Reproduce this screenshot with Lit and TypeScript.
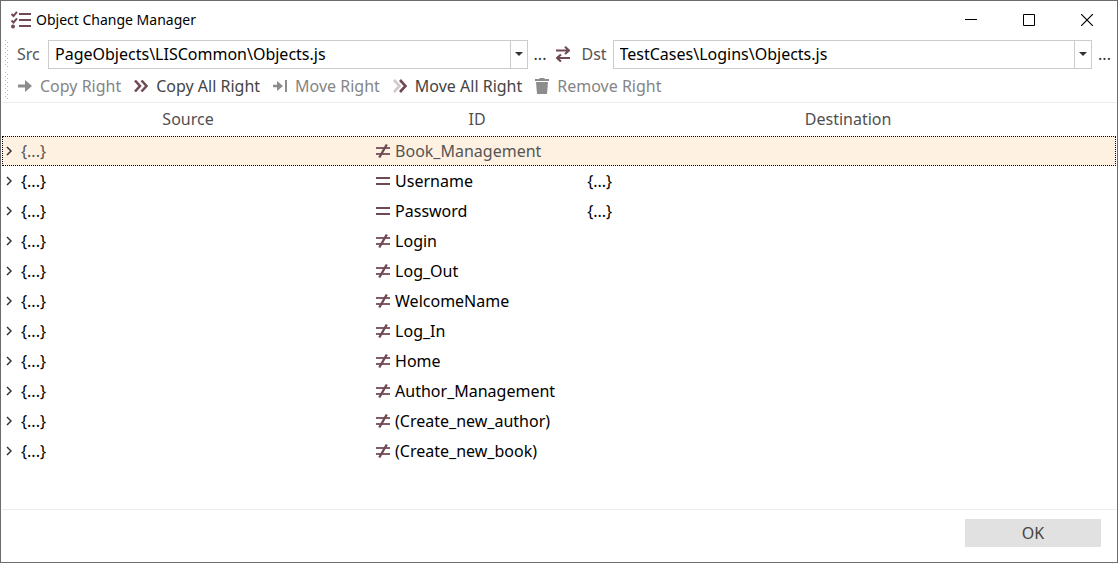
import { LitElement, html, css, svg, nothing } from "lit";
import { customElement, property, state } from "lit/decorators.js";

const glyphs: Record<string, unknown> = {
  arrow: svg`<path d="M0 6.500h7V2l7 6-7 6V9.500H0z" fill="#8c8c8c"/>`,
  chevrons: svg`<path d="M1 2.500L6 8l-5 5.500M7.500 2.500l5 5.500-5 5.500" fill="none" stroke="#6f4a55" stroke-width="2.600"/>`,
  arrowStop: svg`<path d="M0 6.800h4V3l6 5-6 5V9.200H0zM12 2h2v12h-2z" fill="#8c8c8c"/>`,
  fadedChevrons: svg`<path d="M1 2l5.500 6L1 14" fill="none" stroke="#d3c8cc" stroke-width="2.600"/><path d="M7 2l5.500 6L7 14" fill="none" stroke="#6f4a55" stroke-width="2.600"/>`,
  trash: svg`<path d="M0 1h4.500V0h5v1H14v2H0zM1 4h12l-1 12H2z" fill="#8c8c8c"/>`,
  swap: svg`<path d="M0 4.500h13M9 .8l4 3.700-4 3.500M14 12H1M5 8.500L1 12l4 3.500" fill="none" stroke="#6f4a55" stroke-width="2.200"/>`,
  equal: svg`<path d="M0 4h14v2H0zM0 10h14v2H0z" fill="#6f4a55"/>`,
  notEqual: svg`<path d="M0 4h14v2H0zM0 10h14v2H0z" fill="#805d67"/><path d="M10.800 1.500l-7.500 13" stroke="#6f4a55" stroke-width="2.400"/>`,
};

const glyph = (name: string) =>
  html`<svg class="glyph" width="14" height="16" viewBox="0 0 14 16" aria-hidden="true">${glyphs[name]}</svg>`;

const baseText = css`
  button, select {
    font: inherit;
    color: inherit;
    border: 0;
    background: none;
    padding: 0;
    margin: 0;
  }
  svg { display: block; flex: none; }
`;

@customElement("title-bar")
class TitleBar extends LitElement {
  static styles = [baseText, css`
    :host { display: flex; align-items: center; height: 37px; padding: 0 1px 0 9px; }
    .title { margin: 0 auto 0 5px; font-size: 14px; font-weight: 400; color: #000; }
    .control { width: 58px; height: 35px; display: grid; place-items: center; }
  `];
  render() {
    return html`
      <svg width="20" height="18" viewBox="0 0 20 18" aria-hidden="true">
        <path d="M8 3h12M8 9h12M8 15h12" stroke="#6f4a55" stroke-width="2.200"/>
        <path d="M.5 3l2 2L6 .8M.5 9.500l2 2L6 7.300" fill="none" stroke="#6f4a55" stroke-width="2"/>
        <circle cx="2" cy="15.500" r="2" fill="#6f4a55"/>
      </svg>
      <h1 class="title">Object Change Manager</h1>
      <button class="control" aria-label="Minimize"><svg width="12" height="12"><path d="M0 5.500h12" stroke="#000"/></svg></button>
      <button class="control" aria-label="Maximize"><svg width="12" height="12"><path d="M.5.5h11v11H.5z" fill="none" stroke="#000"/></svg></button>
      <button class="control" aria-label="Close"><svg width="12" height="12"><path d="M0 0l12 12M12 0L0 12" stroke="#000" stroke-width="1.200"/></svg></button>
    `;
  }
}

@customElement("file-picker")
class FilePicker extends LitElement {
  @property() label = "";
  @property() path = "";
  static styles = [baseText, css`
    :host { display: flex; align-items: center; flex: 1; min-width: 0; }
    .label { width: 31px; color: #555; }
    .box { flex: 1; min-width: 0; display: grid; border: 1px solid #ccc; height: 27px; }
    .field { grid-area: 1 / 1; appearance: none; width: 100%; padding: 0 24px 0 6px; color: #000; background: #fff; border-radius: 0; }
    .drop { grid-area: 1 / 1; justify-self: end; width: 16px; display: grid; place-items: center; border-left: 1px solid #ccc; pointer-events: none; }
    .browse { width: 25px; color: #333; }
  `];
  render() {
    return html`
      <label class="label" for="path">${this.label}</label>
      <div class="box">
        <select class="field" id="path"><option>${this.path}</option></select>
        <span class="drop"><svg width="8" height="4"><path d="M0 0h8L4 4z" fill="#333"/></svg></span>
      </div>
      <button class="browse" aria-label="Browse ${this.label}">...</button>
    `;
  }
}

@customElement("action-bar")
class ActionBar extends LitElement {
  static styles = [baseText, css`
    :host { display: flex; align-items: center; gap: 13px; height: 32px; padding-left: 1px; }
    .action { display: flex; align-items: center; gap: 8px; color: #444; white-space: nowrap; }
    .action:disabled { color: #858585; }
  `];
  private actions = [
    { text: "Copy Right", icon: "arrow", off: true },
    { text: "Copy All Right", icon: "chevrons", off: false },
    { text: "Move Right", icon: "arrowStop", off: true },
    { text: "Move All Right", icon: "fadedChevrons", off: false },
    { text: "Remove Right", icon: "trash", off: true },
  ];
  render() {
    return this.actions.map(
      (a) => html`<button class="action" ?disabled=${a.off}>${glyph(a.icon)}${a.text}</button>`
    );
  }
}

interface Entry { id: string; same?: boolean }

@customElement("object-table")
class ObjectTable extends LitElement {
  @state() private selected = 0;
  private entries: Entry[] = [
    { id: "Book_Management" },
    { id: "Username", same: true },
    { id: "Password", same: true },
    { id: "Login" },
    { id: "Log_Out" },
    { id: "WelcomeName" },
    { id: "Log_In" },
    { id: "Home" },
    { id: "Author_Management" },
    { id: "(Create_new_author)" },
    { id: "(Create_new_book)" },
  ];
  static styles = [baseText, css`
    :host { display: block; }
    .table { width: 100%; table-layout: fixed; border-collapse: collapse; color: #000; }
    .source { width: 33.4%; }
    .id { width: 18.5%; }
    .head { height: 31px; padding: 0 0 2px; font-weight: 400; color: #505050; }
    .cell { height: 30px; padding: 0; }
    .row.selected { background: #fff1e2; outline: 1px dotted #000; outline-offset: -1px; color: #555; }
    .line { display: flex; align-items: center; white-space: nowrap; }
    .tree { padding-left: 4px; gap: 9px; }
    .name { padding-left: 2px; gap: 5px; }
    .value { padding-left: 7px; }
  `];
  render() {
    return html`
      <table class="table">
        <colgroup><col class="source"><col class="id"><col></colgroup>
        <thead><tr><th class="head">Source</th><th class="head">ID</th><th class="head">Destination</th></tr></thead>
        <tbody>
          ${this.entries.map((e, i) => html`
            <tr class="row ${i === this.selected ? "selected" : ""}" @click=${() => (this.selected = i)}>
              <td class="cell"><div class="line tree">
                <button aria-label="Expand ${e.id}"><svg width="6" height="10"><path d="M1 1l4 4-4 4" fill="none" stroke="#333" stroke-width="1.500"/></svg></button>{...}
              </div></td>
              <td class="cell"><div class="line name">${glyph(e.same ? "equal" : "notEqual")}${e.id}</div></td>
              <td class="cell"><div class="line value">${e.same ? "{...}" : nothing}</div></td>
            </tr>`)}
        </tbody>
      </table>
    `;
  }
}

@customElement("app-root")
class AppRoot extends LitElement {
  static styles = [baseText, css`
    :host {
      display: flex;
      flex-direction: column;
      box-sizing: border-box;
      min-height: 100vh;
      padding-left: 1px;
      border: 1px solid #6b6b6b;
      background: #fff;
      font: 16px/22px "Noto Sans", "Open Sans", sans-serif;
    }
    .tools { display: grid; grid-template-columns: 4px 1fr; column-gap: 8px; padding-left: 3px; }
    .grip {
      margin: 2px 0;
      background:
        linear-gradient(#b4b4b4, #b4b4b4) 0 0 / 4px 4px,
        #fff;
      mask:
        conic-gradient(from 270deg at 1px 1px, #000 90deg, transparent 0) 0 0 / 4px 4px,
        conic-gradient(from 270deg at 1px 1px, #000 90deg, transparent 0) 2px 2px / 4px 4px;
    }
    .paths { display: flex; align-items: center; height: 32px; }
    .swap { margin: 0 12px 0 3px; }
    .body { flex: 1; margin-right: 1px; border: 1px solid #ececec; border-width: 1px 0; }
    .footer { display: flex; justify-content: flex-end; padding: 9px 16px 15px; }
    .ok { width: 136px; height: 28px; background: #e1e1e1; color: #444; }
  `];
  render() {
    return html`
      <title-bar></title-bar>
      <div class="tools">
        <span class="grip"></span>
        <div class="paths">
          <file-picker label="Src" path="PageObjects\\LISCommon\\Objects.js"></file-picker>
          <button class="swap" aria-label="Swap source and destination">${glyph("swap")}</button>
          <file-picker label="Dst" path="TestCases\\Logins\\Objects.js"></file-picker>
        </div>
        <span class="grip"></span>
        <action-bar></action-bar>
      </div>
      <main class="body"><object-table></object-table></main>
      <footer class="footer"><button class="ok">OK</button></footer>
    `;
  }
}
